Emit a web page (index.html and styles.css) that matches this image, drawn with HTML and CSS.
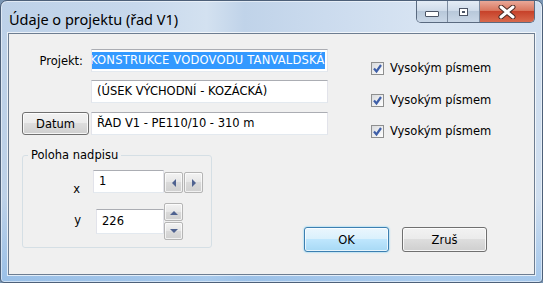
FILE: index.html
```html
<!DOCTYPE html>
<html lang="cs">

<head>
    <meta charset="UTF-8" />
    <title>Údaje o projektu (řad V1)</title>
    <link rel="stylesheet" href="styles.css">
</head>

<body>
    <div class="window">
        <div class="titlebar">
            <span class="title">Údaje o projektu (řad V1)</span>
            <div class="caption">
                <span class="cap cap-min"><span class="min-bar"></span></span>
                <span class="cap cap-max"><span class="max-box"></span></span>
                <span class="cap cap-close">
                    <svg width="18" height="14" viewBox="0 0 18 14">
                        <path d="M3 2 L15 12 M15 2 L3 12" stroke="#4a2a24" stroke-width="5" stroke-linecap="round" />
                        <path d="M3 2 L15 12 M15 2 L3 12" stroke="#ffffff" stroke-width="3" stroke-linecap="round" />
                    </svg>
                </span>
            </div>
        </div>

        <div class="client">
            <div class="top">
                <div class="fields">
                    <div class="row">
                        <span class="lbl">Projekt:</span>
                        <div class="input selected"><span class="hl">KONSTRUKCE VODOVODU TANVALDSKÁ</span></div>
                    </div>
                    <div class="row row2">
                        <span class="lbl"></span>
                        <div class="input">(ÚSEK VÝCHODNÍ - KOZÁCKÁ)</div>
                    </div>
                    <div class="row row3">
                        <button class="btn datum">Datum</button>
                        <div class="input">ŘAD V1 - PE110/10 - 310 m</div>
                    </div>
                </div>

                <div class="checks">
                    <div class="chk"><span class="box"><svg width="11" height="11" viewBox="0 0 11 11"><path d="M2 5.5 L4.5 8.5 L9 2" fill="none" stroke="#3f5fa8" stroke-width="2.2" /></svg></span>Vysokým písmem</div>
                    <div class="chk"><span class="box"><svg width="11" height="11" viewBox="0 0 11 11"><path d="M2 5.5 L4.5 8.5 L9 2" fill="none" stroke="#3f5fa8" stroke-width="2.2" /></svg></span>Vysokým písmem</div>
                    <div class="chk"><span class="box"><svg width="11" height="11" viewBox="0 0 11 11"><path d="M2 5.5 L4.5 8.5 L9 2" fill="none" stroke="#3f5fa8" stroke-width="2.2" /></svg></span>Vysokým písmem</div>
                </div>
            </div>

            <div class="bottom">
                <fieldset class="group">
                    <legend>Poloha nadpisu</legend>
                    <div class="prow prow-x">
                        <span class="plbl lbl-x">x</span>
                        <div class="input num num-x">1</div>
                        <div class="hspin">
                            <span class="sbtn"><svg width="6" height="8" viewBox="0 0 6 8"><path d="M5 0 L1 4 L5 8 Z" fill="#4f6290" /></svg></span>
                            <span class="sbtn"><svg width="6" height="8" viewBox="0 0 6 8"><path d="M1 0 L5 4 L1 8 Z" fill="#4f6290" /></svg></span>
                        </div>
                    </div>
                    <div class="prow prow-y">
                        <span class="plbl lbl-y">y</span>
                        <div class="input num num-y">226</div>
                        <div class="vspin">
                            <span class="sbtn"><svg width="8" height="5" viewBox="0 0 8 5"><path d="M0 5 L4 1 L8 5 Z" fill="#4f6290" /></svg></span>
                            <span class="sbtn"><svg width="8" height="5" viewBox="0 0 8 5"><path d="M0 0 L4 4 L8 0 Z" fill="#4f6290" /></svg></span>
                        </div>
                    </div>
                </fieldset>

                <div class="actions">
                    <button class="btn ok">OK</button>
                    <button class="btn">Zruš</button>
                </div>
            </div>
        </div>
    </div>
</body>

</html>
```

FILE: styles.css
```css
body {
    margin: 0;
    background: #7a96b4;
    font-family: "DejaVu Sans", Tahoma, sans-serif;
    font-size: 11.5px;
    color: #000;
}

.window {
    width: 541px;
    height: 281px;
    border: 1px solid #4d6079;
    border-radius: 7px 7px 4px 4px;
    background:
        linear-gradient(rgba(255, 255, 255, 0) 70%, rgba(110, 170, 230, 0.45) 100%),
        linear-gradient(to right, #bdd1e8 0%, #c7d8ec 25%, #d3e1f0 38%, #c0d3e9 45%, #cbdbee 60%, #d9e5f3 80%, #cfdeef 100%);
    box-shadow: inset 0 0 0 1px rgba(255, 255, 255, 0.5);
    display: flex;
    flex-direction: column;
    overflow: hidden;
}

/* barra de titulo */
.titlebar {
    height: 32px;
    display: flex;
    align-items: flex-start;
}

.title {
    font-family: "Noto Sans", sans-serif;
    font-size: 14.5px;
    padding: 8px 0 0 8px;
    color: #000;
}

.caption {
    margin-left: auto;
    margin-right: 7px;
    display: flex;
    border: 1px solid #5a6a80;
    border-top: none;
    border-radius: 0 0 5px 5px;
    overflow: hidden;
    height: 21px;
}

.cap {
    display: flex;
    align-items: center;
    justify-content: center;
    background: linear-gradient(#e4ecf5 0%, #d0dcea 45%, #b8c8da 50%, #c9d7e7 100%);
}

.cap-min {
    width: 30px;
    border-right: 1px solid #7d8ca0;
}

.cap-max {
    width: 31px;
    border-right: 1px solid #7d8ca0;
}

.cap-close {
    width: 54px;
    background: linear-gradient(#e9a898 0%, #d9775f 45%, #c7422a 50%, #d8694c 100%);
}

.min-bar {
    width: 12px;
    height: 4px;
    border: 1px solid #4c5566;
    border-radius: 1px;
    background: #fff;
    margin-top: 5px;
}

.max-box {
    width: 7px;
    height: 6px;
    border: 1px solid #4c5566;
    box-shadow: inset 0 0 0 2px #fff, inset 0 0 0 3px #4c5566;
    background: #fff;
}

/* area do dialogo */
.client {
    flex: 1;
    margin: 0 7px 7px 7px;
    border: 1px solid #6d7d91;
    box-shadow: 0 0 0 1px rgba(255, 255, 255, 0.7);
    background: #f0f0f0;
    padding: 15px 0 0 13px;
}

.top {
    display: flex;
    align-items: flex-start;
    height: 86px;
}

.fields {
    width: 307px;
}

.row {
    display: flex;
    align-items: center;
    height: 23px;
}

.row2 {
    margin-top: 8px;
}

.row3 {
    margin-top: 9px;
}

.lbl {
    width: 69px;
    padding-right: 8px;
    box-sizing: border-box;
    text-align: right;
}

.input {
    box-sizing: border-box;
    height: 23px;
    width: 237px;
    background: #fff;
    border: 1px solid #e2e3ea;
    border-top-color: #abadb3;
    border-bottom-color: #e3e9ef;
    padding-left: 5px;
    line-height: 21px;
    white-space: nowrap;
    overflow: hidden;
}

.input.selected {
    padding: 2px 2px 2px 0;
    line-height: 17px;
}

.hl {
    display: block;
    background: #3399ff;
    color: #fff;
    text-indent: -2px;
    letter-spacing: 0.2px;
    overflow: hidden;
}

.btn {
    font-family: inherit;
    font-size: 11.5px;
    color: #000;
    height: 23px;
    padding: 0;
    border: 1px solid #707070;
    border-radius: 3px;
    background: linear-gradient(#f2f2f2 0%, #ebebeb 49%, #dddddd 50%, #cfcfcf 100%);
    box-shadow: inset 0 0 0 1px rgba(255, 255, 255, 0.8);
}

.datum {
    width: 67px;
    margin-right: 2px;
}

/* caixas de selecao */
.checks {
    margin-left: 42px;
    padding-top: 9px;
}

.chk {
    display: flex;
    align-items: center;
    height: 20px;
    margin-bottom: 12px;
}

.chk:nth-child(2) {
    margin-bottom: 11px;
}

.box {
    width: 11px;
    height: 11px;
    border: 1px solid #8e8f8f;
    background: linear-gradient(135deg, #d8dadd, #ffffff);
    margin-right: 6px;
    display: flex;
}

/* grupo de posicao */
.bottom {
    display: flex;
    align-items: flex-start;
    margin-top: 13px;
}

.group {
    width: 190px;
    box-sizing: border-box;
    margin: 0;
    padding: 0 0 7px 0;
    border: 1px solid #d5dfe5;
    border-radius: 3px;
}

.group legend {
    padding: 0 3px;
    margin-left: 5px;
    line-height: 14px;
}

.prow {
    display: flex;
}

.prow-x {
    margin-top: 8px;
    align-items: flex-end;
}

.prow-y {
    margin-top: 10px;
    align-items: center;
}

.plbl {
    box-sizing: border-box;
    text-align: right;
}

.lbl-x {
    width: 70px;
    padding-right: 13px;
    margin-bottom: -3px;
}

.lbl-y {
    width: 73px;
    padding-right: 15px;
    padding-bottom: 3px;
}

.num-x {
    width: 71px;
}

.num-y {
    width: 68px;
    height: 25px;
    line-height: 23px;
}

.hspin {
    display: flex;
    gap: 1px;
}

.vspin {
    display: flex;
    flex-direction: column;
    gap: 1px;
}

.sbtn {
    box-sizing: border-box;
    display: flex;
    align-items: center;
    justify-content: center;
    border: 1px solid #b5b5b5;
    border-radius: 2px;
    background: linear-gradient(#f3f3f3 0%, #e6e6e6 49%, #dadada 50%, #d0d0d0 100%);
    box-shadow: inset 0 0 0 1px rgba(255, 255, 255, 0.7);
}

.hspin .sbtn {
    width: 19px;
    height: 21px;
}

.vspin .sbtn {
    width: 19px;
    height: 18px;
}

.actions {
    margin-left: auto;
    margin-right: 47px;
    margin-top: 79px;
    display: flex;
    gap: 13px;
}

.actions .btn {
    width: 85px;
    height: 25px;
}

.ok {
    border-color: #3c7fb1;
    background: linear-gradient(#eaf6fd 0%, #d9f0fc 49%, #bee6fd 50%, #a7d9f5 100%);
    box-shadow: inset 0 0 0 1px rgba(255, 255, 255, 0.7), 0 0 2px #59c7f5;
}
```
